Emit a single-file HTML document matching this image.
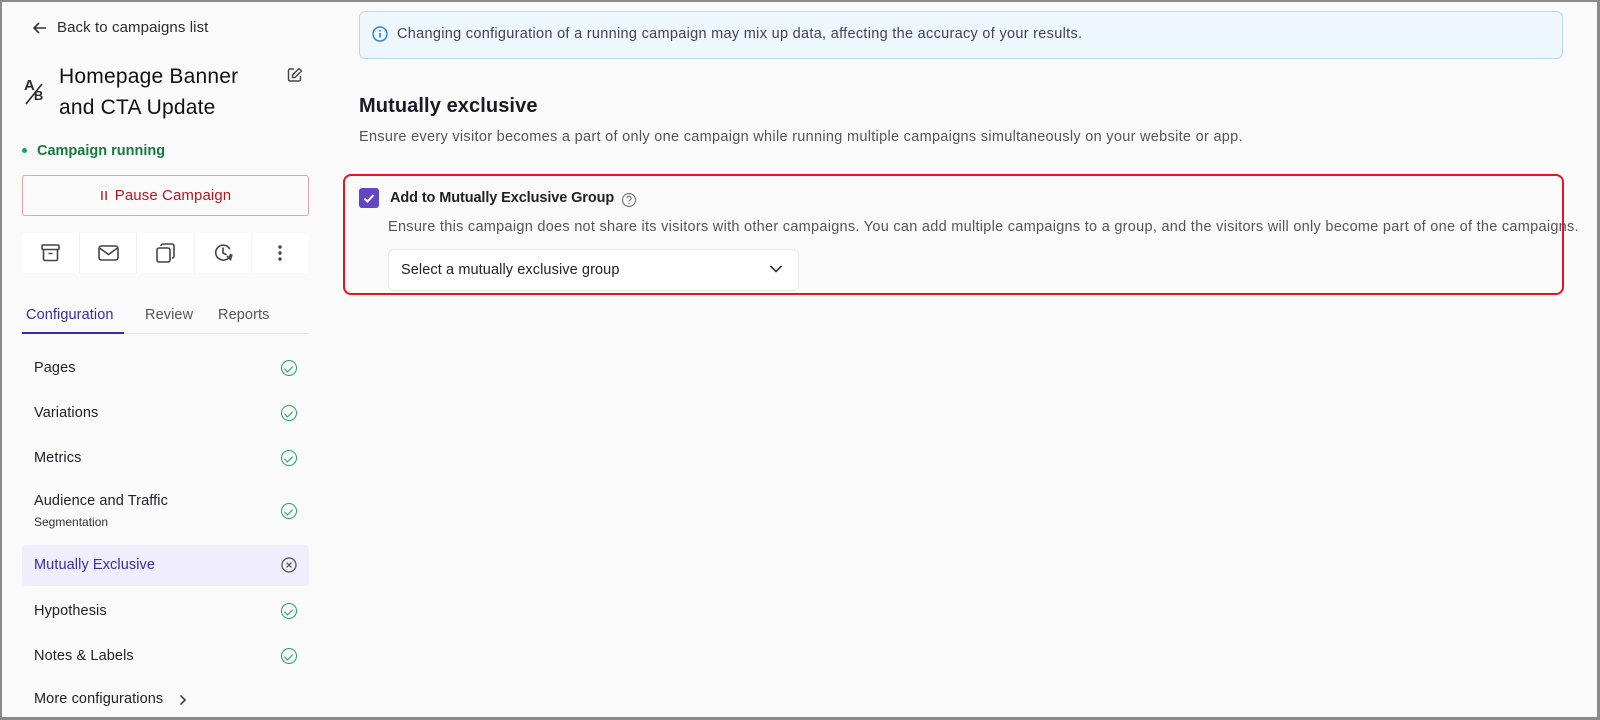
<!DOCTYPE html>
<html><head><meta charset="utf-8"><style>
*{box-sizing:border-box;margin:0;padding:0}
body{width:1600px;height:720px;background:#fafafa;font-family:"Liberation Sans",sans-serif;color:#1f1f29;position:relative;overflow:hidden}
.frame{position:absolute;left:0;top:0;width:1600px;height:720px;border:2px solid #8a8a8a;border-right-width:3px;border-bottom-width:3px}
.a{position:absolute;white-space:nowrap}
.ls{letter-spacing:0.3px}
.ls1{letter-spacing:0.1px}
svg{position:absolute}
.item{position:absolute;left:34px;font-size:14.5px;color:#1f1f29;letter-spacing:0.1px}
.chk{position:absolute;left:281px;width:16px;height:16px;border:1.6px solid #1ea35a;border-radius:50%}
.chk:after{content:"";position:absolute;left:4px;top:2.5px;width:4px;height:7px;border:solid #1ea35a;border-width:0 1.6px 1.6px 0;transform:rotate(45deg)}
</style></head><body>
<div class="frame"></div>
<svg style="left:32px;top:20px" width="16" height="16" viewBox="0 0 16 16"><path d="M14 8H2M7 3L2 8l5 5" fill="none" stroke="#333" stroke-width="1.6"/></svg>
<div class="a ls1" style="left:57px;top:19px;font-size:15px;color:#2a2a35">Back to campaigns list</div>
<div class="a" style="left:24px;top:78px;font-size:15px;line-height:15px;color:#2a2a35;font-weight:bold">A<span style="font-size:13px;position:relative;top:10px;left:-1px">B</span></div>
<svg style="left:24px;top:80px" width="22" height="26"><path d="M2 24L18 4" stroke="#2a2a35" stroke-width="1.6"/></svg>
<div class="a" style="left:59px;top:61px;font-size:21px;line-height:31px;color:#111;letter-spacing:0.2px">Homepage Banner<br>and CTA Update</div>
<svg style="left:286px;top:66px" width="18" height="18" viewBox="0 0 18 18"><path d="M8 3H4a1.5 1.5 0 0 0-1.5 1.5v9A1.5 1.5 0 0 0 4 15h9a1.5 1.5 0 0 0 1.5-1.5V10M13 2.5l2.5 2.5L9 11.5H6.5V9z" fill="none" stroke="#444" stroke-width="1.4" stroke-linejoin="round"/></svg>
<div class="a" style="left:22px;top:148px;width:5px;height:5px;border-radius:50%;background:#1ea35a"></div>
<div class="a" style="left:37px;top:143px;font-size:14.5px;font-weight:bold;color:#167a3e">Campaign running</div>
<div class="a ls1" style="left:22px;top:175px;width:287px;height:41px;border:1px solid #e6a3a3;border-radius:3px;background:#fbfafa;text-align:center;line-height:39px;font-size:15px;color:#c0121b"><span style="display:inline-block;width:8px;height:9px;border-left:2px solid #c0121b;border-right:2px solid #c0121b;margin-right:7px;position:relative;top:0px;transform:scaleX(0.7)"></span>Pause Campaign</div>
<div class="a" style="left:22px;top:233px;width:287px;height:40px;background:#fff;border-radius:4px;display:flex">
<div style="flex:1;border-right:1px solid #f0f0f0;position:relative"><svg style="left:19px;top:11px" width="19" height="18"><rect x="1" y="1" width="17" height="4.5" rx="1" fill="none" stroke="#444" stroke-width="1.6"/><path d="M2.5 5.5v9.5a1.5 1.5 0 0 0 1.5 1.5h11a1.5 1.5 0 0 0 1.5-1.5V5.5M7.5 9.5h4" fill="none" stroke="#444" stroke-width="1.6"/></svg></div>
<div style="flex:1;border-right:1px solid #f0f0f0;position:relative"><svg style="left:18px;top:12px" width="21" height="16"><rect x="1" y="1" width="19" height="14" rx="2.5" fill="none" stroke="#444" stroke-width="1.6"/><path d="M1.5 3L10.5 9.5 19.5 3" fill="none" stroke="#444" stroke-width="1.6"/></svg></div>
<div style="flex:1;border-right:1px solid #f0f0f0;position:relative"><svg style="left:19px;top:10px" width="20" height="20"><rect x="1" y="5" width="13" height="14" rx="2" fill="none" stroke="#444" stroke-width="1.6"/><path d="M5 3a2 2 0 0 1 2-2h9a2 2 0 0 1 2 2v10a2 2 0 0 1-2 2" fill="none" stroke="#444" stroke-width="1.6"/></svg></div>
<div style="flex:1;border-right:1px solid #f0f0f0;position:relative"><svg style="left:19px;top:10px" width="20" height="20"><path d="M16.5 11.5A7.5 7.5 0 1 1 15.5 5.5M9 5v5l3 1.5M13.5 13.5l3 3 1.3-4.3" fill="none" stroke="#444" stroke-width="1.6" stroke-linecap="round"/></svg></div>
<div style="flex:1;position:relative"><svg style="left:25px;top:11px" width="6" height="18"><circle cx="3" cy="3" r="1.7" fill="#444"/><circle cx="3" cy="9" r="1.7" fill="#444"/><circle cx="3" cy="15" r="1.7" fill="#444"/></svg></div>
</div>
<div class="a ls1" style="left:26px;top:307px;font-size:14.5px;color:#3a2aa6">Configuration</div>
<div class="a ls1" style="left:145px;top:307px;font-size:14.5px;color:#555">Review</div>
<div class="a ls1" style="left:218px;top:307px;font-size:14.5px;color:#555">Reports</div>
<div class="a" style="left:22px;top:333px;width:287px;height:1px;background:#e6e6e6"></div>
<div class="a" style="left:22px;top:332px;width:102px;height:2px;background:#3a2aa6"></div>
<div class="item" style="top:360px">Pages</div><div class="chk" style="top:360px"></div>
<div class="item" style="top:405px">Variations</div><div class="chk" style="top:405px"></div>
<div class="item" style="top:450px">Metrics</div><div class="chk" style="top:450px"></div>
<div class="item" style="top:493px">Audience and Traffic</div>
<div class="a" style="left:34px;top:515px;font-size:12px;color:#333">Segmentation</div><div class="chk" style="top:503px"></div>
<div class="a" style="left:22px;top:545px;width:287px;height:41px;background:#f0edfd;border-radius:4px"></div>
<div class="item" style="top:557px;color:#3a2aa6">Mutually Exclusive</div>
<svg style="left:281px;top:557px" width="16" height="16"><circle cx="8" cy="8" r="7" fill="none" stroke="#555" stroke-width="1.3"/><path d="M5.6 5.6l4.8 4.8M10.4 5.6l-4.8 4.8" stroke="#555" stroke-width="1.3"/></svg>
<div class="item" style="top:603px">Hypothesis</div><div class="chk" style="top:603px"></div>
<div class="item" style="top:648px">Notes &amp; Labels</div><div class="chk" style="top:648px"></div>
<div class="item" style="top:691px">More configurations</div>
<svg style="left:179px;top:694px" width="8" height="12"><path d="M1.5 1.5l4.5 4.5-4.5 4.5" fill="none" stroke="#333" stroke-width="1.5"/></svg>

<div class="a" style="left:359px;top:11px;width:1204px;height:48px;background:#eef6fe;border:1px solid #b7d7f6;border-radius:6px"></div>
<svg style="left:372px;top:26px" width="16" height="16"><circle cx="8" cy="8" r="7" fill="none" stroke="#2b7de0" stroke-width="1.4"/><path d="M8 7v4.5" stroke="#2b7de0" stroke-width="1.6"/><circle cx="8" cy="4.8" r="0.9" fill="#2b7de0"/></svg>
<div class="a ls" style="left:397px;top:26px;font-size:14.5px;color:#44444f">Changing configuration of a running campaign may mix up data, affecting the accuracy of your results.</div>
<div class="a" style="left:359px;top:95px;font-size:20px;font-weight:bold;color:#1a1a22;letter-spacing:0.1px">Mutually exclusive</div>
<div class="a ls" style="left:359px;top:129px;font-size:14.5px;color:#555">Ensure every visitor becomes a part of only one campaign while running multiple campaigns simultaneously on your website or app.</div>
<div class="a" style="left:343px;top:174px;width:1221px;height:121px;border:2px solid #e8141c;border-radius:8px"></div>
<div class="a" style="left:359px;top:188px;width:20px;height:20px;background:#6246c6;border-radius:3px"></div>
<svg style="left:362px;top:191px" width="14" height="14"><path d="M2.5 7.5l3 3 6-6.5" fill="none" stroke="#fff" stroke-width="2"/></svg>
<div class="a" style="left:390px;top:190px;font-size:14.5px;font-weight:bold;color:#222;letter-spacing:-0.1px">Add to Mutually Exclusive Group</div>
<svg style="left:621px;top:192px" width="16" height="16"><circle cx="8" cy="8" r="6.5" fill="none" stroke="#777" stroke-width="1.2"/><path d="M6 6.3a2 2 0 1 1 2.8 1.8c-.6.3-.8.7-.8 1.4" fill="none" stroke="#777" stroke-width="1.2"/><circle cx="8" cy="11.5" r="0.8" fill="#777"/></svg>
<div class="a" style="left:388px;top:219px;font-size:14.5px;color:#555;letter-spacing:0.28px">Ensure this campaign does not share its visitors with other campaigns. You can add multiple campaigns to a group, and the visitors will only become part of one of the campaigns.</div>
<div class="a" style="left:388px;top:249px;width:411px;height:42px;background:#fff;border:1px solid #e8e8e8;border-radius:6px"></div>
<div class="a ls1" style="left:401px;top:262px;font-size:14.5px;color:#222">Select a mutually exclusive group</div>
<svg style="left:769px;top:264px" width="14" height="10"><path d="M1.5 2l5.5 5.5L12.5 2" fill="none" stroke="#333" stroke-width="1.6"/></svg>
</body></html>
